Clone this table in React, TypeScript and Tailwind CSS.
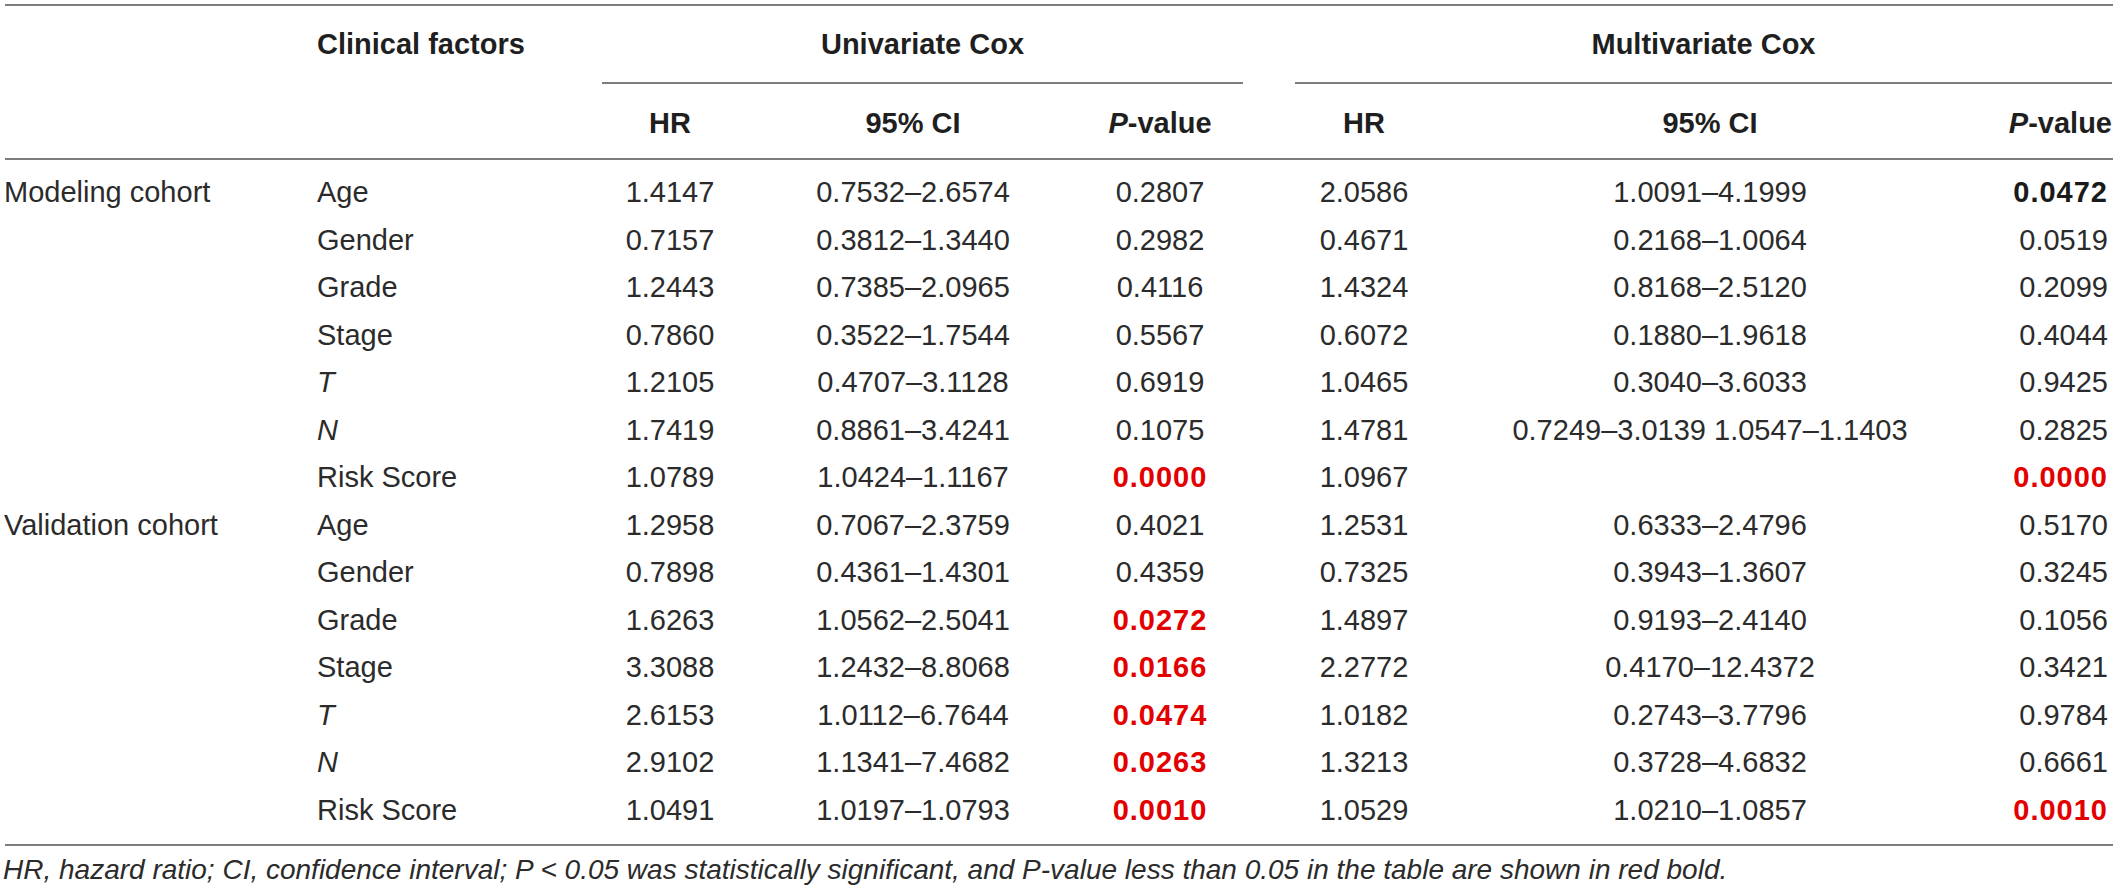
import React from "react";

type Row = {
  cohort?: string;
  factor: string;
  italic?: boolean;
  hr1: string;
  ci1: string;
  p1: string;
  p1s?: "red" | "bold";
  hr2: string;
  ci2: string;
  p2: string;
  p2s?: "red" | "bold";
};

const rows: Row[] = [
  { cohort: "Modeling cohort", factor: "Age", hr1: "1.4147", ci1: "0.7532–2.6574", p1: "0.2807", hr2: "2.0586", ci2: "1.0091–4.1999", p2: "0.0472", p2s: "bold" },
  { factor: "Gender", hr1: "0.7157", ci1: "0.3812–1.3440", p1: "0.2982", hr2: "0.4671", ci2: "0.2168–1.0064", p2: "0.0519" },
  { factor: "Grade", hr1: "1.2443", ci1: "0.7385–2.0965", p1: "0.4116", hr2: "1.4324", ci2: "0.8168–2.5120", p2: "0.2099" },
  { factor: "Stage", hr1: "0.7860", ci1: "0.3522–1.7544", p1: "0.5567", hr2: "0.6072", ci2: "0.1880–1.9618", p2: "0.4044" },
  { factor: "T", italic: true, hr1: "1.2105", ci1: "0.4707–3.1128", p1: "0.6919", hr2: "1.0465", ci2: "0.3040–3.6033", p2: "0.9425" },
  { factor: "N", italic: true, hr1: "1.7419", ci1: "0.8861–3.4241", p1: "0.1075", hr2: "1.4781", ci2: "0.7249–3.0139 1.0547–1.1403", p2: "0.2825" },
  { factor: "Risk Score", hr1: "1.0789", ci1: "1.0424–1.1167", p1: "0.0000", p1s: "red", hr2: "1.0967", ci2: "", p2: "0.0000", p2s: "red" },
  { cohort: "Validation cohort", factor: "Age", hr1: "1.2958", ci1: "0.7067–2.3759", p1: "0.4021", hr2: "1.2531", ci2: "0.6333–2.4796", p2: "0.5170" },
  { factor: "Gender", hr1: "0.7898", ci1: "0.4361–1.4301", p1: "0.4359", hr2: "0.7325", ci2: "0.3943–1.3607", p2: "0.3245" },
  { factor: "Grade", hr1: "1.6263", ci1: "1.0562–2.5041", p1: "0.0272", p1s: "red", hr2: "1.4897", ci2: "0.9193–2.4140", p2: "0.1056" },
  { factor: "Stage", hr1: "3.3088", ci1: "1.2432–8.8068", p1: "0.0166", p1s: "red", hr2: "2.2772", ci2: "0.4170–12.4372", p2: "0.3421" },
  { factor: "T", italic: true, hr1: "2.6153", ci1: "1.0112–6.7644", p1: "0.0474", p1s: "red", hr2: "1.0182", ci2: "0.2743–3.7796", p2: "0.9784" },
  { factor: "N", italic: true, hr1: "2.9102", ci1: "1.1341–7.4682", p1: "0.0263", p1s: "red", hr2: "1.3213", ci2: "0.3728–4.6832", p2: "0.6661" },
  { factor: "Risk Score", hr1: "1.0491", ci1: "1.0197–1.0793", p1: "0.0010", p1s: "red", hr2: "1.0529", ci2: "1.0210–1.0857", p2: "0.0010", p2s: "red" },
];

function pClass(s?: "red" | "bold") {
  if (s === "red") return "font-bold tracking-[1px] text-[#e30000]";
  if (s === "bold") return "font-bold tracking-[1px] text-[#1a1a1a]";
  return "";
}

const grid =
  "grid grid-cols-[317px_243px_220px_266px_228px_180px_512px_152px] items-center";

export default function App() {
  return (
    <div
      className="w-[2118px] h-[893px] bg-white text-[#2b2b2b] text-[29px] leading-none"
      style={{ fontFamily: '"Liberation Sans", Arial, Helvetica, sans-serif' }}
    >
      <div className="pt-[4px]">
        <div className="mx-[5px] h-[2px] bg-[#7d7d7d]" />
        {/* Header row 1 */}
        <div className="flex h-[78px] font-bold text-[#1f1f1f]">
          <div className="w-[317px]" />
          <div className="w-[285px] flex items-center pb-[2px]">Clinical factors</div>
          <div className="w-[641px] flex items-center justify-center border-b-2 border-[#7d7d7d]">
            Univariate Cox
          </div>
          <div className="w-[52px]" />
          <div className="w-[817px] flex items-center justify-center border-b-2 border-[#7d7d7d]">
            Multivariate Cox
          </div>
        </div>
        {/* Header row 2 */}
        <div className={`${grid} h-[74px] pt-[4px] font-bold text-[#1f1f1f]`}>
          <div />
          <div />
          <div className="text-center">HR</div>
          <div className="text-center">95% CI</div>
          <div className="text-center">
            <span className="italic">P</span>-value
          </div>
          <div className="text-center">HR</div>
          <div className="text-center">95% CI</div>
          <div className="text-right pr-[6px]">
            <span className="italic">P</span>-value
          </div>
        </div>
        <div className="mx-[5px] h-[2px] bg-[#7d7d7d]" />
        {/* Body */}
        <div className="pt-[9px] pb-[10px]">
          {rows.map((r, i) => (
            <div key={i} className={`${grid} h-[47.5px]`}>
              <div className="pl-[4px] whitespace-nowrap">{r.cohort ?? ""}</div>
              <div className={r.italic ? "italic" : ""}>{r.factor}</div>
              <div className="text-center">{r.hr1}</div>
              <div className="text-center">{r.ci1}</div>
              <div className={`text-center ${pClass(r.p1s)}`}>{r.p1}</div>
              <div className="text-center">{r.hr2}</div>
              <div className="text-center whitespace-nowrap">{r.ci2}</div>
              <div className={`text-right pr-[10px] ${pClass(r.p2s)}`}>{r.p2}</div>
            </div>
          ))}
        </div>
        <div className="mx-[5px] h-[2px] bg-[#7d7d7d]" />
        <div className="pt-[9px] pl-[3px] italic text-[28px] leading-[30px] whitespace-nowrap">
          HR, hazard ratio; CI, confidence interval; P &lt; 0.05 was statistically significant, and P-value less than 0.05 in the table are shown in red bold.
        </div>
      </div>
    </div>
  );
}
